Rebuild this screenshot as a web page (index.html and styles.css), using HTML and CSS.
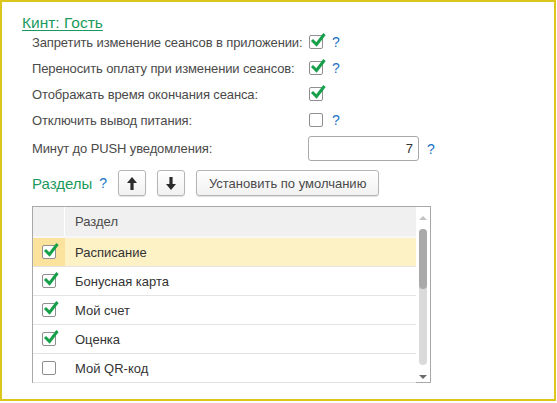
FILE: index.html
```html
<!DOCTYPE html>
<html lang="ru">
  <head>
    <meta charset="UTF-8" />
    <meta name="viewport" content="width=device-width, initial-scale=1.0" />
    <link rel="stylesheet" href="styles.css">
    <title>Кинт: Гость</title>
  </head>
  <body>
    <main class="frame">
      <h1 class="title">Кинт: Гость</h1>

      <div class="settings">
        <div class="row">
          <span class="label">Запретить изменение сеансов в приложении:</span>
          <span class="cb checked"><svg viewBox="0 0 18 18"><path d="M3 8 L7.5 12.5 L15.5 2" /></svg></span>
          <span class="hint">?</span>
        </div>
        <div class="row">
          <span class="label">Переносить оплату при изменении сеансов:</span>
          <span class="cb checked"><svg viewBox="0 0 18 18"><path d="M3 8 L7.5 12.5 L15.5 2" /></svg></span>
          <span class="hint">?</span>
        </div>
        <div class="row">
          <span class="label">Отображать время окончания сеанса:</span>
          <span class="cb checked"><svg viewBox="0 0 18 18"><path d="M3 8 L7.5 12.5 L15.5 2" /></svg></span>
        </div>
        <div class="row">
          <span class="label">Отключить вывод питания:</span>
          <span class="cb"></span>
          <span class="hint">?</span>
        </div>
        <div class="row row-input">
          <span class="label">Минут до PUSH уведомления:</span>
          <input class="field" type="text" value="7" />
          <span class="hint">?</span>
        </div>

        <div class="toolbar">
          <span class="section-title">Разделы</span>
          <span class="hint">?</span>
          <button class="btn btn-icon btn-first">
            <svg viewBox="0 0 10 13"><path d="M5 0 L10 6 L6.6 6 L6.6 13 L3.4 13 L3.4 6 L0 6 Z" /></svg>
          </button>
          <button class="btn btn-icon">
            <svg viewBox="0 0 10 13"><path d="M5 13 L10 7 L6.6 7 L6.6 0 L3.4 0 L3.4 7 L0 7 Z" /></svg>
          </button>
          <button class="btn btn-text">Установить по умолчанию</button>
        </div>

        <div class="table">
          <div class="grid">
            <div class="tr head">
              <div class="td td-check"></div>
              <div class="td td-name">Раздел</div>
            </div>
            <div class="tr current">
              <div class="td td-check"><span class="cb checked"><svg viewBox="0 0 18 18"><path d="M3 8 L7.5 12.5 L15.5 2" /></svg></span></div>
              <div class="td td-name">Расписание</div>
            </div>
            <div class="tr">
              <div class="td td-check"><span class="cb checked"><svg viewBox="0 0 18 18"><path d="M3 8 L7.5 12.5 L15.5 2" /></svg></span></div>
              <div class="td td-name">Бонусная карта</div>
            </div>
            <div class="tr">
              <div class="td td-check"><span class="cb checked"><svg viewBox="0 0 18 18"><path d="M3 8 L7.5 12.5 L15.5 2" /></svg></span></div>
              <div class="td td-name">Мой счет</div>
            </div>
            <div class="tr">
              <div class="td td-check"><span class="cb checked"><svg viewBox="0 0 18 18"><path d="M3 8 L7.5 12.5 L15.5 2" /></svg></span></div>
              <div class="td td-name">Оценка</div>
            </div>
            <div class="tr">
              <div class="td td-check"><span class="cb"></span></div>
              <div class="td td-name">Мой QR-код</div>
            </div>
          </div>
          <div class="scroll">
            <span class="arrow-up"></span>
            <span class="track"><span class="thumb"></span></span>
            <span class="arrow-down"></span>
          </div>
        </div>
      </div>
    </main>
  </body>
</html>
```

FILE: styles.css
```css
* {
  box-sizing: border-box;
  margin: 0;
  padding: 0;
  --green: #1a9a5c;
  --blue: #1b73c4;
  --text: #4a4a4a;
  --line: #a8a8a8;
}

body {
  font-family: 'Liberation Sans', Arial, sans-serif;
  font-size: 13px;
  color: var(--text);
  background-color: white;
}

.frame {
  display: block;
  width: 556px;
  height: 401px;
  border: 2px solid #dcc61b;
  padding: 12px 0 0 20px;
}

.title {
  font-size: 15.5px;
  font-weight: normal;
  line-height: 18px;
  height: 15px;
  color: var(--green);
  text-decoration: underline;
  text-underline-offset: 2px;
}

.settings {
  padding-left: 10px;
}

.row {
  display: flex;
  align-items: center;
  height: 26px;
}

.label {
  width: 277px;
  letter-spacing: -0.12px;
}

.hint {
  color: var(--blue);
  font-size: 14px;
  margin-left: 9px;
}

/* checkbox */
.cb {
  position: relative;
  display: inline-block;
  width: 14px;
  height: 14px;
  border: 1px solid #8f8f8f;
  border-radius: 2px;
  background-color: white;
}

.cb svg {
  position: absolute;
  left: -1px;
  top: -4px;
  width: 18px;
  height: 18px;
  overflow: visible;
}

.cb path {
  fill: none;
  stroke: #17a04a;
  stroke-width: 3;
}

.row-input {
  height: 25px;
  margin-top: 3px;
}

.row-input .label {
  width: 276px;
}

.field {
  width: 111px;
  height: 25px;
  border: 1px solid #a9a9a9;
  border-radius: 3px;
  padding-right: 5px;
  text-align: right;
  font-family: inherit;
  font-size: 13px;
  color: #333;
  outline: none;
}

.row-input .hint {
  margin-left: 8px;
}

/* toolbar */
.toolbar {
  display: flex;
  align-items: center;
  margin-top: 9px;
  height: 26px;
}

.section-title {
  font-size: 15px;
  color: var(--green);
}

.toolbar .hint {
  margin-left: 7px;
}

.btn {
  height: 26px;
  margin-left: 11px;
  border: 1px solid #b5b5b5;
  border-radius: 3px;
  background: linear-gradient(#ffffff, #f1f1f1);
  box-shadow: 0 1px 1px rgba(0, 0, 0, 0.12);
  font-family: inherit;
  font-size: 13px;
  color: var(--text);
}

.btn-first {
  margin-left: 11px;
}

.btn-icon {
  display: flex;
  align-items: center;
  justify-content: center;
  width: 28px;
}

.btn-icon svg {
  width: 10px;
  height: 13px;
}

.btn-icon path {
  fill: #2b2b2b;
}

.btn-text {
  width: 183px;
}

/* table */
.table {
  display: flex;
  width: 399px;
  height: 177px;
  margin-top: 10px;
  border: 1px solid var(--line);
}

.grid {
  flex: 1;
  color: #333;
}

.tr {
  display: flex;
  height: 29px;
  border-bottom: 1px solid #e3e3e3;
}

.td {
  display: flex;
  align-items: center;
}

.td-check {
  width: 32px;
  justify-content: center;
}

.td-name {
  flex: 1;
  padding-left: 10px;
}

.head {
  height: 31px;
  border-bottom: 2px solid #f7f7f7;
  background-color: #f0f0f0;
  color: var(--text);
}

.head .td-check {
  border-right: 1px solid white;
}

.current {
  background-color: #fdf1c6;
}

.current .td-check {
  background-color: #fbe39d;
}

.scroll {
  display: flex;
  flex-direction: column;
  align-items: center;
  width: 14px;
  padding-top: 9px;
}

.arrow-up {
  border: 4px solid transparent;
  border-top: 0;
  border-bottom: 4px solid #c2c2c2;
}

.arrow-down {
  margin-top: 10px;
  border: 4px solid transparent;
  border-bottom: 0;
  border-top: 4px solid #6b6b6b;
}

.track {
  display: block;
  width: 8px;
  height: 136px;
  margin-top: 9px;
  border-radius: 4px;
  background-color: #dadada;
}

.thumb {
  display: block;
  height: 60px;
  border-radius: 4px;
  background-color: #a9a9a9;
}
```
